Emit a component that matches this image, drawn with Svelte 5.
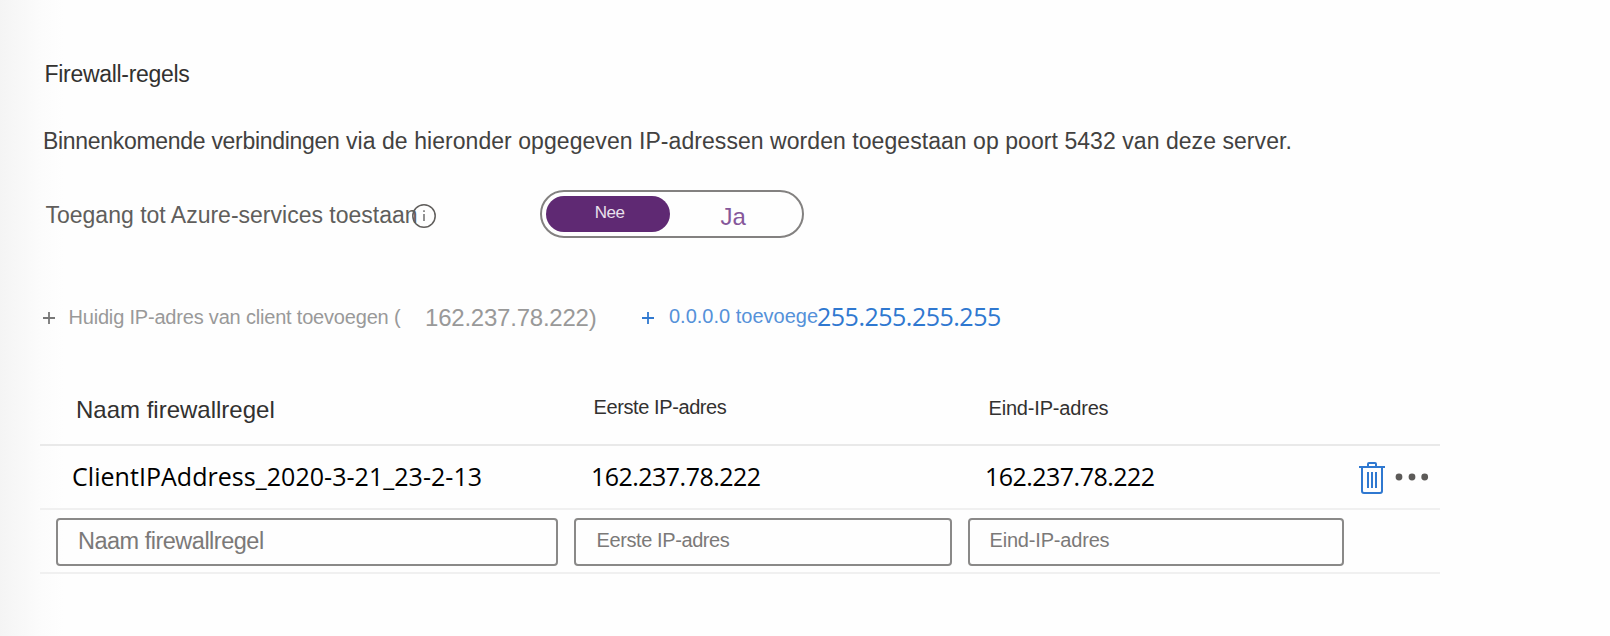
<script>
  const rules = [{ name: 'ClientIPAddress_2020-3-21_23-2-13', start: '162.237.78.222', end: '162.237.78.222' }];
</script>

<main>
  <h1 class="t title">Firewall-regels</h1>
  <p class="t intro"><span class="lead">Binnenkomende verbindingen</span> via de hieronder opgegeven IP-adressen worden toegestaan op poort 5432 van deze server.</p>

  <section class="access">
    <span class="t label">Toegang tot Azure-services toestaan</span>
    <svg class="info" width="24" height="24" viewBox="0 0 24 24"><circle cx="12" cy="12" r="11.2" fill="none" stroke="#605e5c" stroke-width="1.5"/><path d="M12 10v7M12 6.3v1.8" stroke="#777" stroke-width="1.6"/></svg>
    <div class="toggle"><span class="no"><span class="t">Nee</span></span><span class="yes"><span class="t">Ja</span></span></div>
  </section>

  <section class="commands">
    <svg class="plus" width="14" height="14" viewBox="0 0 14 14"><path d="M7 1v12M1 7h12" stroke="#777" stroke-width="1.8"/></svg>
    <span class="t add">Huidig IP-adres van client toevoegen (</span>
    <span class="t ip">162.237.78.222)</span>
    <svg class="plus blue" width="14" height="14" viewBox="0 0 14 14"><path d="M7 1v12M1 7h12" stroke="#3079d0" stroke-width="1.8"/></svg>
    <span class="t zero">0.0.0.0 toevoege</span>
    <span class="t max">255.255.255.255</span>
  </section>

  <section class="table">
    <div class="row head"><span class="t big">Naam firewallregel</span><span class="t first">Eerste IP-adres</span><span class="t last">Eind-IP-adres</span></div>
    {#each rules as rule}
      <div class="row rule">
        <span class="t name">{rule.name}</span><span class="t start">{rule.start}</span><span class="t end">{rule.end}</span>
        <span class="actions">
          <svg width="26" height="32" viewBox="0 0 26 32" fill="none" stroke="#2f78d0" stroke-width="2"><path d="M0 5h26M9 5V2Q9 1 10 1h6q1 0 1 1v3M3 5v24q0 2 2 2h16q2 0 2-2V5"/><path d="M9 10v16M13 10v16M17 10v16"/></svg>
          <svg class="dots" width="34" height="8" viewBox="0 0 34 8" fill="#5c5a58"><circle cx="4" cy="4" r="3.4"/><circle cx="17" cy="4" r="3.4"/><circle cx="29.7" cy="4" r="3.4"/></svg>
        </span>
      </div>
    {/each}
    <div class="row edit"><div class="field"><span class="t big">Naam firewallregel</span></div><div class="field"><span class="t first">Eerste IP-adres</span></div><div class="field"><span class="t last">Eind-IP-adres</span></div></div>
  </section>
</main>

<style>
  :global(body) { margin: 0; background: #fefefe; }
  main { box-sizing: border-box; width: 1610px; height: 636px; padding-top: 59px; overflow: hidden; font-family: "Liberation Sans", Arial, sans-serif; background: linear-gradient(90deg, #f4f4f4 0, #f8f8f8 20px, #fcfcfc 42px, #fefefe 64px); }
  .t { display: block; line-height: 30px; white-space: nowrap; font-weight: 400; }
  .title { margin: 0 0 0 44.5px; font-size: 23px; letter-spacing: -0.3px; color: #323130; }
  .intro { margin: 37px 0 34px 43px; font-size: 23px; letter-spacing: 0.055px; color: #424140; }
  .lead { letter-spacing: -0.3px; }
  .access, .commands { display: flex; align-items: flex-start; }
  .access { height: 48px; }
  .label { width: 366.5px; margin: 10px 0 0 45.5px; font-size: 23px; color: #605e5c; }
  .info { margin-top: 14px; }
  .toggle { box-sizing: border-box; display: flex; width: 264px; height: 48px; margin-left: 104px; padding: 4px; border: 2px solid #838180; border-radius: 24px; }
  .no { box-sizing: border-box; display: flex; justify-content: center; width: 124px; height: 36px; padding: 2px 0 0 3px; border-radius: 18px; background: #5f2973; color: #e9e0ec; font-size: 17px; letter-spacing: -0.5px; }
  .yes { padding: 6px 0 0 50.5px; color: #85579a; font-size: 24px; }
  .commands { height: 32px; margin-top: 63px; }
  .plus { margin: 10px 0 0 42px; }
  .blue { margin-left: 40px; }
  .add { width: 356.5px; margin: 1px 0 0 12.5px; font-size: 20px; letter-spacing: -0.19px; color: #999; }
  .ip { width: 176px; margin-top: 2px; font-size: 24px; letter-spacing: -0.22px; color: #999; }
  .zero { width: 148px; margin-left: 14px; font-size: 20px; color: #5591d9; }
  .max { font-family: "Open Sans", sans-serif; font-size: 25px; letter-spacing: -0.5px; color: #2f78d0; }
  .table { width: 1400px; margin: 47px 0 0 40px; }
  .row { box-sizing: border-box; display: grid; grid-template-columns: 502px 378px 376px 80px; column-gap: 16px; height: 64px; padding-left: 16px; border-bottom: 2px solid #f0f0f0; align-items: start; }
  .head { height: 66px; border-color: #e9e9e9; color: #323130; }
  .big { font-size: 24px; }
  .first { font-size: 20px; letter-spacing: -0.4px; }
  .last { font-size: 20px; letter-spacing: -0.18px; }
  .head .big { margin: 15px 0 0 20px; }
  .head .first { margin: 12px 0 0 19.5px; }
  .head .last { margin: 13px 0 0 20.5px; }
  .rule { font-family: "Open Sans", sans-serif; font-size: 25px; color: #000; }
  .rule .t { margin-top: 15px; }
  .rule .name { margin-left: 16px; letter-spacing: 0.04px; }
  .start, .end { margin-left: 17px; letter-spacing: -0.53px; }
  .actions { display: flex; align-items: center; gap: 10px; margin: 16px 0 0 -1px; }
  .dots { margin-bottom: 2px; }
  .edit { padding-top: 8px; }
  .field { box-sizing: border-box; height: 48px; border: 2px solid #8a8988; border-radius: 4px; color: #7b7978; padding: 6px 0 0 20px; }
  .field .big { font-size: 23.5px; letter-spacing: -0.5px; }
  .field .first { margin: -1px 0 0 0.5px; }
  .field .last { margin: -1px 0 0 -0.5px; }
</style>
